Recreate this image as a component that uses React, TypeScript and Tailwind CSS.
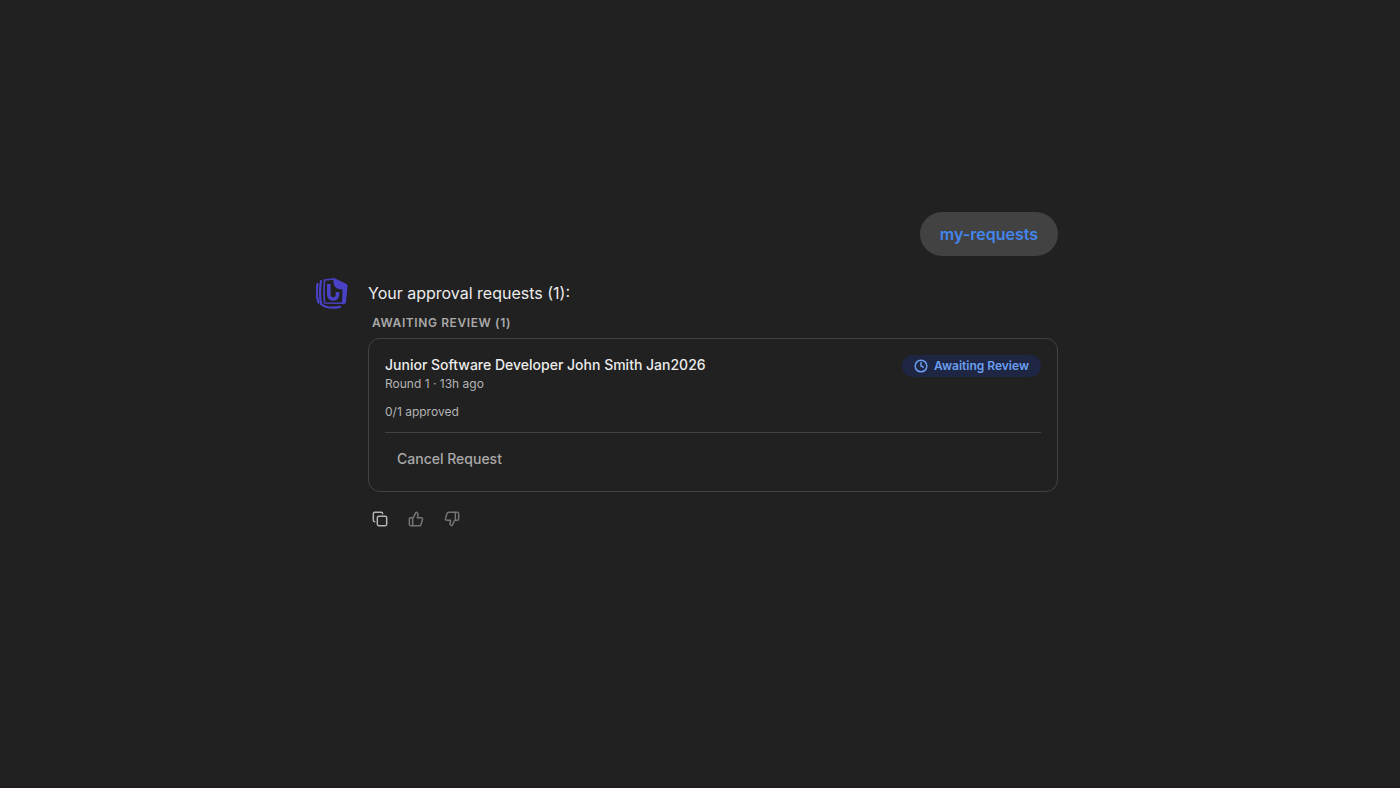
import { useState } from "react";
import { Clock, Copy, ThumbsDown, ThumbsUp } from "lucide-react";
import clsx from "clsx";

type ApprovalRequest = {
  id: number;
  title: string;
  round: number;
  age: string;
  approved: number;
  approvers: number;
};

const REQUESTS: ApprovalRequest[] = [
  {
    id: 1,
    title: "Junior Software Developer John Smith Jan2026",
    round: 1,
    age: "13h ago",
    approved: 0,
    approvers: 1,
  },
];

function Logo() {
  return (
    <svg viewBox="0 0 32 32" className="size-8 shrink-0" aria-hidden="true">
      <g fill="none" stroke="#4a42c6" strokeLinejoin="round" strokeLinecap="round">
        <path d="M1.500 7C.5 13 .5 20 2.500 25.500" strokeWidth="2.200" />
        <path d="M5 4C3.800 11 3.800 20 5 27C9 30.500 17 31.200 24 29.800" strokeWidth="2.200" />
        <path d="M8.500 3L17 2M8.500 3C7.800 10 7.800 19 8.500 26L26 26.200" strokeWidth="1.600" />
        <path d="M12.800 7V17.500C12.800 23.500 21.500 23.500 21.500 17.500V15" strokeWidth="3.600" strokeLinecap="butt" />
      </g>
      <path d="M17 .4L30 6.800C31.200 7.400 31.700 8.200 31.500 9.500L30 25C29.800 26.600 28.500 27.300 27 27.200L25.800 27C26.300 22 26.500 17 26.400 12.500C21 12.300 18.200 10 17.600 6.500Z" fill="#4a42c6" />
    </svg>
  );
}

function RequestCard({ request }: { request: ApprovalRequest }) {
  return (
    <article className="rounded-xl border border-[#424242] p-4">
      <div className="flex items-start justify-between gap-3">
        <div className="min-w-0">
          <h3 className="text-sm font-medium text-[#ececec]">{request.title}</h3>
          <p className="mt-px text-xs text-[#b4b4b4]">
            Round {request.round} · {request.age}
          </p>
        </div>
        <span className="flex shrink-0 items-center gap-1.5 rounded-full bg-[#1f2643] px-3 py-[3px] text-xs font-semibold text-[#6b9ff0]">
          <Clock className="size-3.5" strokeWidth={2.5} />
          Awaiting Review
        </span>
      </div>

      <p className="mt-3 text-xs text-[#b4b4b4]">
        {request.approved}/{request.approvers} approved
      </p>

      <div className="mt-3 border-t border-[#424242] pt-2.5">
        <button type="button" className="rounded-lg px-3 py-1.5 text-sm font-medium text-[#a9a9a9] hover:bg-[#2f2f2f]">
          Cancel Request
        </button>
      </div>
    </article>
  );
}

export default function App() {
  const [vote, setVote] = useState<"up" | "down" | null>(null);

  return (
    <main className="min-h-screen border-b-2 border-[#211a1e] bg-[#212121] px-4 pt-[212px] font-['Inter',sans-serif] text-[#ececec]">
      <div className="mx-auto max-w-3xl pr-[26px]">
        {/* User message */}
        <div className="flex justify-end">
          <div className="rounded-full bg-[#424242] px-5 py-2.5 font-semibold text-[#4285ec]">my-requests</div>
        </div>

        {/* Assistant reply */}
        <div className="mt-[21px] flex items-start gap-5">
          <Logo />
          <div className="min-w-0 flex-1 pt-1">
            <p>Your approval requests ({REQUESTS.length}):</p>

            <h2 className="mt-2.5 mb-[7px] px-1 text-xs font-semibold tracking-wider text-[#a9a9a9] uppercase">
              Awaiting Review ({REQUESTS.length})
            </h2>
            {REQUESTS.map((r) => (
              <RequestCard key={r.id} request={r} />
            ))}

            <div className="mt-[17px] flex gap-3 pl-[3px]">
              <button type="button" aria-label="Copy" className="rounded-lg py-0.5 pr-1 pl-px text-[#b4b4b4]">
                <Copy className="size-4" strokeWidth={2.25} />
              </button>
              <button
                type="button"
                aria-label="Good response"
                onClick={() => setVote("up")}
                className={clsx("rounded-lg px-1 py-0.5", vote === "up" ? "text-[#ececec]" : "text-[#747474]")}
              >
                <ThumbsUp className="size-4" strokeWidth={2.25} />
              </button>
              <button
                type="button"
                aria-label="Bad response"
                onClick={() => setVote("down")}
                className={clsx("rounded-lg px-1 py-0.5", vote === "down" ? "text-[#ececec]" : "text-[#747474]")}
              >
                <ThumbsDown className="size-4" strokeWidth={2.25} />
              </button>
            </div>
          </div>
        </div>
      </div>
    </main>
  );
}
